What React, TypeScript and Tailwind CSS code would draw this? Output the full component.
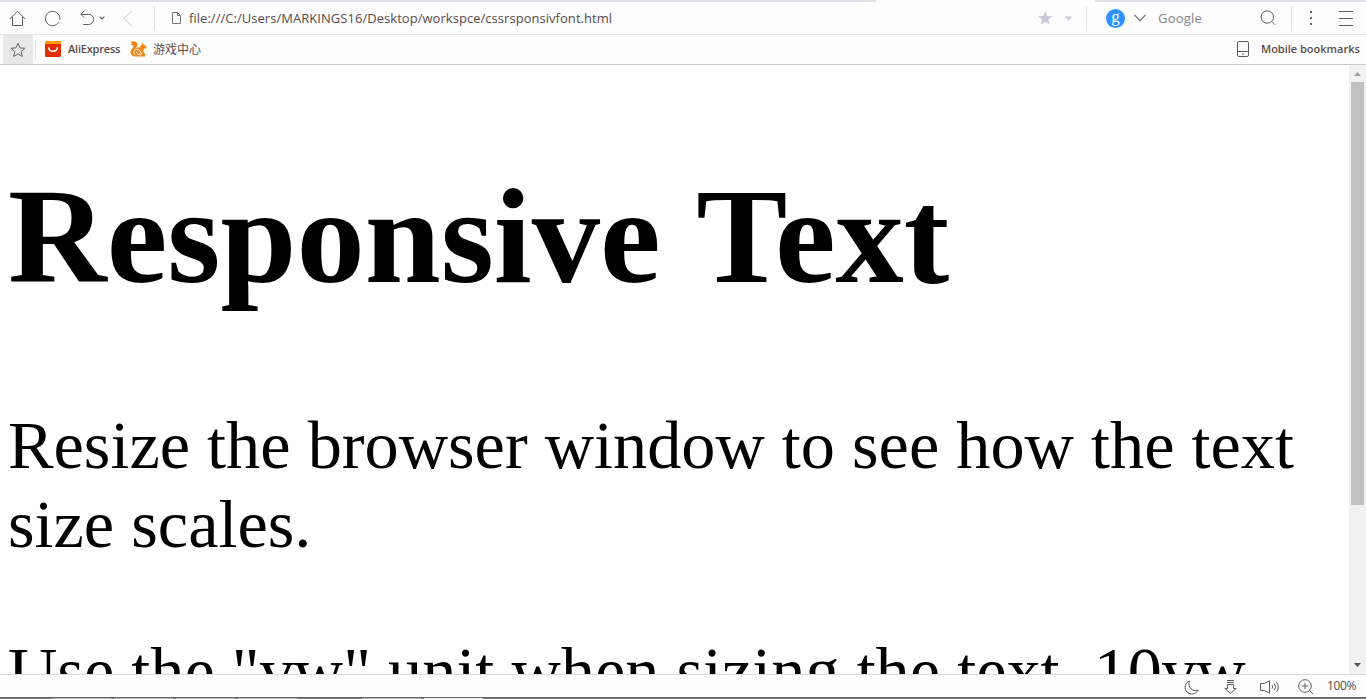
import React from "react";

type IconProps = { w: number; h: number; className?: string; children: React.ReactNode };

function Icon({ w, h, className = "", children }: IconProps) {
  return (
    <svg width={w} height={h} viewBox={`0 0 ${w} ${h}`} fill="none" stroke="#5c5c5c" className={`block shrink-0 ${className}`}>
      {children}
    </svg>
  );
}

function TabStrip() {
  return (
    <div className="flex h-0.5 shrink-0 justify-between">
      <div className="w-[876px] bg-[#e2e1e7]" />
      <div className="w-[271px] bg-[#e2e1e7]" />
    </div>
  );
}

function AddressBar() {
  return (
    <div className="flex h-[33px] shrink-0 items-center border-b border-[#e6e6e6] bg-[#fdfdfd]">
      <Icon w={17} h={17} className="ml-[9px]">
        <path d="M.8 9 8.500 1.200 16.200 9M3.500 7v8.500h10V7" />
      </Icon>
      <Icon w={17} h={17} className="ml-[18px]">
        <path d="M14.800 12.200a7.200 7.200 0 1 1 1-3.700M15.800 9.800v-1.300" />
      </Icon>
      <Icon w={15} h={16} className="ml-[19px]">
        <path d="M4.300.8.8 4.300l3.500 3.600M1 4.400h7.600a5 5 0 0 1 0 10.100H3.300" />
      </Icon>
      <Icon w={6} h={4} className="ml-[4px]">
        <path d="m.6.6 2.400 2.400L5.400.6" strokeWidth="1.2" />
      </Icon>
      <Icon w={10} h={17} className="ml-[18px]">
        <path d="M8.700 1 1 8.500 8.700 16" stroke="#c4c4c4" />
      </Icon>
      <div className="ml-[21px] h-6 w-px bg-[#e4e3e8]" />
      <Icon w={9} h={12} className="ml-[17px]">
        <path d="M.5.5h5l3 3v8h-8zM5.500.5v3h3" stroke="#7b7474" />
      </Icon>
      <div className="ml-2 w-[840px] whitespace-nowrap font-['Open_Sans',sans-serif] text-[13px] leading-5 tracking-[0.04px] text-[#584b4b]">
        file:///C:/Users/MARKINGS16/Desktop/workspce/cssrsponsivfont.html
      </div>
      <Icon w={15} h={14} className="ml-[9px]">
        <path d="m7.200.2 2 4.800 5.200.2-4.100 3.300 1.500 5-4.600-2.800-4.500 2.800L4 8.500 0 5.200 5.300 5z" fill="#c9cbd7" stroke="none" />
      </Icon>
      <Icon w={9} h={5} className="ml-[11px]">
        <path d="M.5.5h8L4.500 4.800z" fill="#c9cbd7" stroke="none" />
      </Icon>
      <div className="ml-[13px] h-6 w-px shrink-0 bg-[#e4e3e8]" />
      <div className="ml-[19px] flex size-[19px] shrink-0 items-center justify-center rounded-full bg-[#2b92ff] font-['Liberation_Serif',serif] text-[17px] leading-none text-white">
        <span className="-translate-y-[2px]">g</span>
      </div>
      <Icon w={12} h={8} className="ml-[9px]">
        <path d="m.6 1 5.400 5.600L11.400 1" stroke="#777" strokeWidth="1.2" />
      </Icon>
      <div className="ml-3 w-[102px] shrink-0 font-['Open_Sans',sans-serif] text-[13px] leading-5 tracking-[0.2px] text-[#85858a]">Google</div>
      <Icon w={16} h={16}>
        <circle cx="7.300" cy="7" r="6.200" />
        <path d="m11.700 11.400 3.500 3.500" />
      </Icon>
      <div className="ml-[15px] h-6 w-px shrink-0 bg-[#e4e3e8]" />
      <Icon w={2} h={14} className="ml-[18px]">
        <path d="M0 0h2v2H0zM0 6h2v2H0zM0 12h2v2H0z" fill="#666" stroke="none" />
      </Icon>
      <Icon w={15} h={15} className="ml-[27px]">
        <path d="M0 .5h14M0 7.500h14M0 14.500h14" />
      </Icon>
    </div>
  );
}

function BookmarksBar() {
  return (
    <div className="flex h-[30px] shrink-0 items-center border-b border-[#cec7c5] bg-[#fdfdfd] font-['Open_Sans','Noto_Sans_CJK_SC',sans-serif] text-[11px] font-semibold text-[#5b4c4a]">
      <div className="ml-[3px] flex h-full w-[30px] items-center justify-center bg-[#e8e8e8]">
        <Icon w={16} h={16}>
          <path d="m8 1.200 2 4.700 5 .4-3.800 3.300 1.200 5L8 11.900l-4.400 2.700 1.200-5L1 6.300l5-.4z" stroke="#666" />
        </Icon>
      </div>
      <div className="ml-[2px] h-5 w-px bg-[#e2e2e2]" />
      <Icon w={16} h={16} className="mb-px ml-[9px]">
        <rect width="16" height="16" rx="1.500" fill="#e62e04" stroke="none" />
        <path d="M0 3V1.500Q0 0 1.500 0h13Q16 0 16 1.500V3z" fill="#ff9a00" stroke="none" />
        <path d="M3.600 6.300c.7 5.200 8.100 5.200 8.800 0" stroke="#fff" strokeWidth="1.500" />
      </Icon>
      <span className="ml-[7px] w-[52px] whitespace-nowrap tracking-[-0.2px]">AliExpress</span>
      <Icon w={17} h={16} className="mb-px ml-[10px]">
        <path d="M.8.500C4-.4 7.200.6 7.600 3.200 7.900 5.200 5.900 6.100 5 8c1.400-1.500 3.300-2.200 5.200-1.700.1-1.300.6-2.300 1.500-2.900L12.300 1.800l1 1.800c1.700.4 2.700 1.500 3.200 3-.6 1-1.600 1.200-2.700 1 .4 1.200-.2 2-.9 2.600 1.500.9 2.400 2.400 2.300 5.300H5.500C1.700 15.500-.1 13 .6 10.300 1.300 7.800 4 6.800 3.300 5 2.800 3.800 1.200 4.300.2 3.300c1 .1 1.700-.2 2-.8C1.500 2.200 1 1.500.8.500z" fill="#f28412" stroke="none" />
        <path d="M5.300 13.900C1.900 11.600 4.500 7.700 7.900 8.400c3.400.7 3.300 4.900.4 4.900-2 0-2.100-2.400-.5-2.600M10.300 14.500c.3-1.300 1-2.200 2.200-2.700" stroke="#fff" strokeWidth="1" />
      </Icon>
      <span className="ml-[6px] w-[50px] whitespace-nowrap text-[12px] font-normal">游戏中心</span>
      <Icon w={12} h={16} className="mb-px ml-auto">
        <rect x=".5" y=".5" width="11" height="15" rx="1.500" />
        <path d="M.5 10.500h11M5 13h2" />
      </Icon>
      <span className="ml-3 w-[105px] whitespace-nowrap">Mobile bookmarks</span>
    </div>
  );
}

function Scrollbar() {
  return (
    <div className="flex w-[17px] shrink-0 flex-col items-center bg-[#f1f1f1]">
      <Icon w={17} h={17}>
        <path d="M5 11 8.500 7 12 11z" fill="#a0a0a0" stroke="none" />
      </Icon>
      <div className="h-[423px] w-[13px] bg-[#c1c1c1]" />
      <Icon w={17} h={17} className="mt-auto">
        <path d="M5 6h7l-3.500 4z" fill="#505050" stroke="none" />
      </Icon>
    </div>
  );
}

function Page() {
  return (
    <main className="flex h-[609px] shrink-0 overflow-hidden bg-white font-['Liberation_Serif',serif] text-black">
      <div className="min-w-0 flex-1 overflow-hidden px-2">
        <h1 className="mt-[93px] text-[136.6px] leading-[157px] font-bold whitespace-nowrap [word-spacing:4px]">Responsive Text</h1>
        <p className="mt-[91px] text-[68.3px] leading-[79px]">
          Resize the browser window to see how the text size scales.
        </p>
        <p className="mt-[68px] text-[68.3px] leading-[79px]">Use the "vw" unit when sizing the text. 10vw</p>
      </div>
      <Scrollbar />
    </main>
  );
}

function StatusBar() {
  return (
    <div className="flex h-[23px] shrink-0 items-center border-t border-[#dcdcdc] bg-[#fdfdfd]">
      <Icon w={15} h={15} className="mt-0.5 ml-auto">
        <path d="M5.400 1C-.3 3.400-.2 11.200 5 13.400c3.600 1.600 7.500.1 9-3.200C8.300 12 3.200 7 5.400 1z" />
      </Icon>
      <Icon w={13} h={14} className="mt-0.5 ml-[25px]">
        <path d="M3 .5h7M3 2.500h7M3.500 4.500h6v4h2.700L6.500 13.400.800 8.500h2.700z" />
      </Icon>
      <Icon w={19} h={14} className="mt-px ml-[23px]">
        <path d="M.5 3.500h4L9.500.800v12.400l-5-2.700h-4zM12 5.200q1.400 1.800 0 3.600M14.200 3.500q2.600 3.500 0 7M16.500 2q3.600 5 0 10" />
      </Icon>
      <Icon w={16} h={16} className="mt-px ml-[19px]">
        <circle cx="7" cy="7" r="6.300" />
        <path d="M7 3.800v6.400M3.800 7h6.400M11.600 11.600l3.600 3.600" />
      </Icon>
      <span className="ml-[13px] w-[39px] whitespace-nowrap font-['Open_Sans',sans-serif] text-[12px] leading-5 tracking-[-0.4px] text-[#584b4b]">100%</span>
    </div>
  );
}

function DesktopEdge() {
  return (
    <div className="flex h-0.5 shrink-0 gap-0.5 border-t border-[#66676d] bg-[#77787e] pl-[52px]">
      <div className="w-[59px] bg-[#bcb8b9]" />
      <div className="ml-px w-[59px] bg-[#bcb8b9]" />
      <div className="ml-px w-[59px] bg-[#bbbcc2]" />
      <div className="ml-px w-[59px] bg-[#bbbcc2]" />
      <div className="ml-[63px] w-[59px] bg-[#bbb8bd]" />
      <div className="ml-px w-[59px] bg-[#f5f3f5]" />
    </div>
  );
}

export default function App() {
  return (
    <div className="flex h-[699px] w-[1366px] flex-col overflow-hidden bg-[#fdfdfd]">
      <TabStrip />
      <AddressBar />
      <BookmarksBar />
      <Page />
      <StatusBar />
      <DesktopEdge />
    </div>
  );
}
